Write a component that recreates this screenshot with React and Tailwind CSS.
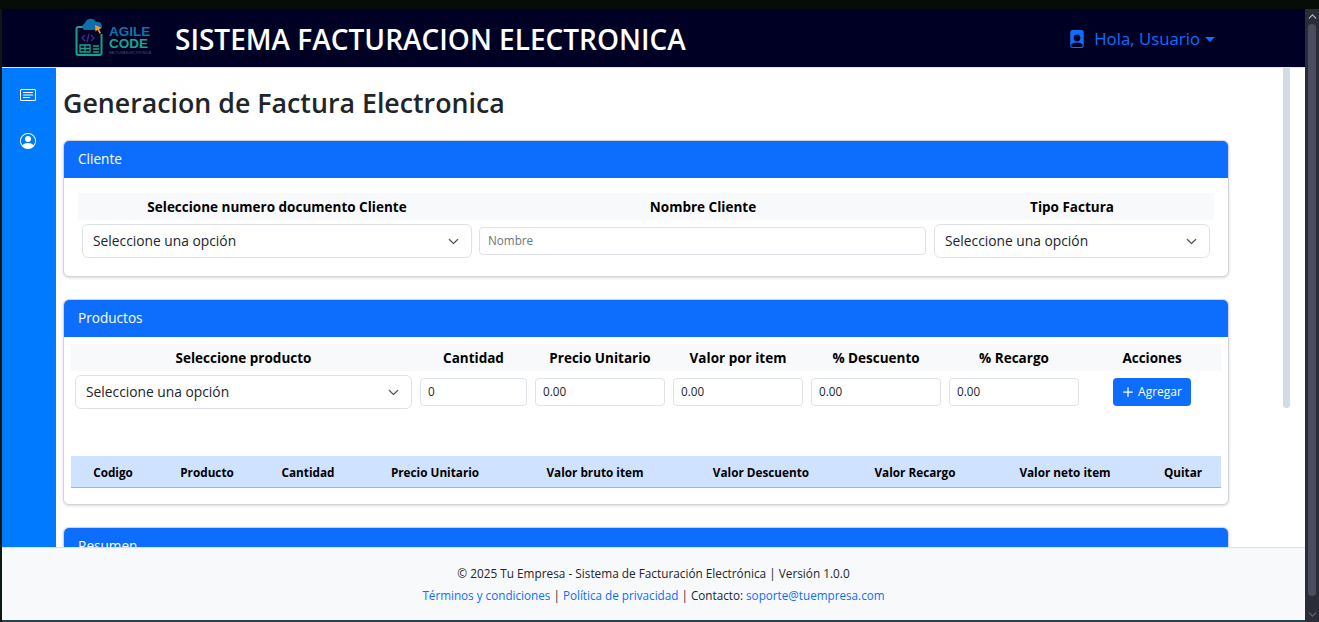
import { BsCardText, BsPersonCircle, BsFilePersonFill, BsPlus, BsChevronDown, BsChevronUp } from "react-icons/bs";

const FONT = "font-['Open_Sans','Noto_Sans',sans-serif]";

function Logo() {
  return (
    <div className="flex items-center gap-[4px] w-[78px] h-[42px]">
      <svg width="30" height="40" viewBox="0 0 30 40" fill="none" className="shrink-0">
        <path d="M10 9H3.500a2 2 0 0 0-2 2v24a2 2 0 0 0 2 2h21a2 2 0 0 0 2-2V16" stroke="#12a58a" strokeWidth="2" />
        <path d="M9 12a4 4 0 0 1 1-7 6 6 0 0 1 11-1 4 4 0 0 1 3 8z" fill="#0f6fa8" />
        <path d="M20 7l7 3-3 1 2 4-1.500 .8-2-4-2 2z" fill="#f59a23" />
        <path d="M10 17l-3 3 3 3M16 17l3 3-3 3M14 16l-2 8" stroke="#4a2a8f" strokeWidth="1.300" />
        <path d="M5 27h10v7H5zM5 30.500h10M10 27v7" stroke="#12a58a" strokeWidth="1.300" />
        <path d="M18 28h6M18 31h6M18 34h6" stroke="#12a58a" strokeWidth="1.300" />
      </svg>
      <div className="flex flex-col pt-[5px] font-['Liberation_Sans',sans-serif] leading-none">
        <span className="text-[13.500px] leading-[12px] font-bold text-[#0f75a8]">AGILE</span>
        <span className="text-[13.500px] leading-[12px] font-bold text-[#14a88e]">CODE</span>
        <span className="text-[3.500px] leading-[6px] text-[#4b5563] whitespace-nowrap">FACTURA ELECTRONICA</span>
      </div>
    </div>
  );
}

function Select({ className }) {
  return (
    <div className={`flex items-center justify-between h-[34px] bg-white border border-[#dee2e6] rounded-md pl-[10px] pr-[12px] text-[13.800px] text-[#212529] ${className}`}>
      <span>Seleccione una opción</span>
      <BsChevronDown className="text-[11px] text-[#343a40] stroke-[0.8px]" />
    </div>
  );
}

function Input({ className, value, placeholder }) {
  return (
    <input
      readOnly
      value={value}
      placeholder={placeholder}
      className={`h-[28px] bg-white border border-[#dee2e6] rounded px-[7px] pb-[2px] text-[11.700px] text-[#212529] placeholder:text-[#6c757d] outline-none ${className}`}
    />
  );
}

function Card({ title, className, children }) {
  return (
    <section className={`w-[1166px] shrink-0 bg-white border border-[#d3d4d5] rounded-md shadow-[0_1px_3px_rgba(0,0,0,0.15)] ${className}`}>
      <header className="h-[37px] flex items-center px-[14px] bg-[#0d6efd] text-white text-[13.600px] rounded-t-[5px]">{title}</header>
      {children}
    </section>
  );
}

const HEAD_CLIENTE = [
  ["Seleccione numero documento Cliente", "w-[398px]"],
  ["Nombre Cliente", "w-[454px]"],
  ["Tipo Factura", "w-[284px]"],
];

const HEAD_PRODUCTOS = [
  ["Seleccione producto", "w-[345px]"],
  ["Cantidad", "w-[115px]"],
  ["Precio Unitario", "w-[138px]"],
  ["Valor por item", "w-[138px]"],
  ["% Descuento", "w-[138px]"],
  ["% Recargo", "w-[138px]"],
  ["Acciones", "w-[138px]"],
];

const HEAD_ITEMS = [
  ["Codigo", "w-[84px]"],
  ["Producto", "w-[104px]"],
  ["Cantidad", "w-[98px]"],
  ["Precio Unitario", "w-[156px]"],
  ["Valor bruto item", "w-[164px]"],
  ["Valor Descuento", "w-[168px]"],
  ["Valor Recargo", "w-[140px]"],
  ["Valor neto item", "w-[160px]"],
  ["Quitar", "w-[76px]"],
];

export default function App() {
  return (
    <div className={`h-[622px] w-[1319px] flex flex-col overflow-hidden bg-[#060c06] ${FONT}`}>
      <div className="h-[9px] shrink-0" />
      <div className="flex flex-1 min-h-0">
        <div className="w-[2px] shrink-0 bg-[#0a1a10]" />
        <div className="w-[1303px] flex flex-col min-w-0">
          {/* navbar */}
          <nav className="h-[59px] shrink-0 flex items-center bg-[#000025] border-b border-[#e5e7eb] pl-[73px] pr-[90px]">
            <Logo />
            <h1 className="ml-[22px] pt-[2px] text-[28px] font-semibold text-white whitespace-nowrap">SISTEMA FACTURACION ELECTRONICA</h1>
            <div className="ml-auto pt-[2px] flex items-center text-[#0d6efd] text-[16.800px]">
              <BsFilePersonFill className="text-[18px] mr-[8px]" />
              <span>Hola, Usuario</span>
              <span className="ml-[5px] w-0 h-0 border-x-[5px] border-x-transparent border-t-[5px] border-t-[#0d6efd]" />
            </div>
          </nav>

          <div className="flex flex-1 min-h-0">
            {/* sidebar */}
            <aside className="w-[54px] shrink-0 bg-[#007bff] flex flex-col items-center pt-[19px] pr-[2px] gap-[30px] text-white">
              <BsCardText className="text-[16px]" />
              <BsPersonCircle className="text-[16px]" />
            </aside>

            {/* content */}
            <main className="flex-1 flex min-w-0 bg-white overflow-hidden">
              <div className="w-[1227px] pl-[7px] flex flex-col shrink-0">
                <h2 className="mt-[16px] mb-[17px] h-[39px] flex items-center text-[26.750px] font-semibold text-[#212529] whitespace-nowrap">Generacion de Factura Electronica</h2>

                <Card title="Cliente" className="h-[137px]">
                  <div className="px-[14px] pt-[15px]">
                    <div className="flex h-[27px] pt-[2px] items-center bg-[#f8f9fa] text-[13.500px] font-bold text-black">
                      {HEAD_CLIENTE.map(([label, w]) => (
                        <div key={label} className={`${w} text-center`}>{label}</div>
                      ))}
                    </div>
                    <div className="flex items-center pl-1 pr-1 gap-[7px] mt-[4px]">
                      <Select className="w-[390px]" />
                      <Input className="w-[447px] pl-2" placeholder="Nombre" />
                      <Select className="w-[276px] ml-[1px]" />
                    </div>
                  </div>
                </Card>

                <Card title="Productos" className="h-[206px] mt-[22px]">
                  <div className="px-[7px] pt-[7px]">
                    <div className="flex h-[27px] pt-[2px] items-center bg-[#f8f9fa] text-[13.500px] font-bold text-black">
                      {HEAD_PRODUCTOS.map(([label, w]) => (
                        <div key={label} className={`${w} text-center`}>{label}</div>
                      ))}
                    </div>
                    <div className="flex items-center pl-1 gap-2 mt-[4px]">
                      <Select className="w-[337px]" />
                      <Input className="w-[107px]" value="0" />
                      <Input className="w-[130px]" value="0.00" />
                      <Input className="w-[130px]" value="0.00" />
                      <Input className="w-[130px]" value="0.00" />
                      <Input className="w-[130px]" value="0.00" />
                      <button className="ml-[26px] w-[78px] h-[28px] pb-[1px] pr-[4px] flex items-center justify-center bg-[#0d6efd] rounded text-white text-[12px]">
                        <BsPlus className="text-[20px]" />
                        Agregar
                      </button>
                    </div>
                    <div className="flex h-[32px] mt-[47px] pt-[2px] items-center bg-[#cfe2ff] border-b border-[#a6b5cc] text-[11.750px] font-bold text-black">
                      {HEAD_ITEMS.map(([label, w]) => (
                        <div key={label} className={`${w} text-center`}>{label}</div>
                      ))}
                    </div>
                  </div>
                </Card>

                <Card title="Resumen" className="h-[120px] mt-[22px]" />
              </div>

              {/* page scrollbar */}
              <div className="w-[7px] h-[340px] bg-[#d3dce5] rounded-b-sm shrink-0" />
            </main>
          </div>

          {/* footer */}
          <footer className="h-[73px] shrink-0 bg-[#f8f9fa] border-t border-[#dee2e6] flex flex-col items-center pt-[14px] text-[11.800px] leading-[22px] text-[#212529]">
            <p>© 2025 Tu Empresa - Sistema de Facturación Electrónica | Versión 1.0.0</p>
            <p className="text-[11.700px]">
              <a className="text-[#0d6efd]">Términos y condiciones</a> | <a className="text-[#0d6efd]">Política de privacidad</a> | Contacto: <a className="text-[#0d6efd]">soporte@tuempresa.com</a>
            </p>
          </footer>
          <div className="h-[2px] shrink-0 bg-[#24444c]" />
        </div>

        {/* browser scrollbar */}
        <div className="w-[14px] shrink-0 bg-[#2a2c38] flex flex-col items-center">
          <BsChevronUp className="text-[9px] text-[#c5c7d0] mt-[3px] shrink-0 stroke-1" />
          <div className="w-[8px] flex-1 mt-[3px] mb-[14px] rounded-full bg-[#4a4d60]" />
          <BsChevronDown className="text-[9px] text-[#6a6c78] mb-[3px] shrink-0 stroke-1" />
        </div>
      </div>
    </div>
  );
}
